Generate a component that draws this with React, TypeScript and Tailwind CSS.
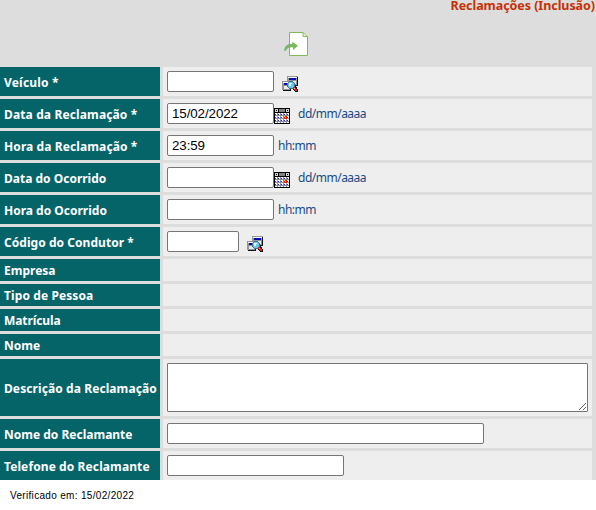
import type { ReactNode } from "react";

function LookupIcon({ className = "" }: { className?: string }) {
  return (
    <svg className={`shrink-0 ${className}`} width="16" height="16" viewBox="0 0 16 16" shapeRendering="crispEdges">
      <path fill="#111" d="M6 1h10v9H6zM1 6h8v9H1z" />
      <path fill="#949494" d="M5 0h11v1h-1v8H5zM0 5h8v9H0z" />
      <path fill="#e8e8e8" d="M7 5h7v3H7zM2 10h5v3H2z" />
      <path fill="#fff" d="M6 1h9v1H6zM1 6h6v1H1z" />
      <path fill="#0808b8" d="M7 2h7v2H7zM2 7h4v2H2z" />
      <path fill="#3f6d94" d="M7 5h4v1h1v1h1v4h-1v1h-1v1H7v-1H6v-1H5V7h1V6h1z" />
      <path fill="#67c8ee" d="M7 6h4v1h1v4h-1v1H7v-1H6V7h1z" />
      <path fill="#d9faff" d="M7 7h3v1H9v2H7z" />
      <path fill="#111" d="M13 10h1v1h1v2h1v3h-3v-1h-1v-1h-1v-2h1z" />
      <path fill="#e52010" d="M11 11h2v1h1v1h1v2h-2v-1h-1v-1h-1z" />
      <path fill="#ffb050" d="M12 12h1v1h-1z" />
    </svg>
  );
}

const calendarRows = [5, 8, 11, 14];
const calendarCols = [1, 4, 7, 10, 13];

function CalendarIcon() {
  return (
    <svg className="mt-[5px] shrink-0" width="16" height="16" viewBox="0 0 16 16" shapeRendering="crispEdges">
      <path fill="#000" d="M0 0h16v16H0z" />
      <path fill="#d4d4d4" d="M1 1h3v3H1zM12 1h3v3h-3z" />
      <path fill="#808080" d="M5 1h6v3H5z" />
      <path fill="#000" d="M2 2h1v1H2zM13 2h1v1h-1z" />
      <path fill="#8d8d9c" d="M1 5h14v10H1z" />
      {calendarRows.map((y) =>
        calendarCols.map((x) => (
          <g key={`${x}-${y}`}>
            <path fill="#fff" d={`M${x} ${y}h2v${y === 14 ? 1 : 2}h-2z`} />
            {y !== 14 && <path fill="#2828cc" d={`M${x} ${y + 1}h1v1h-1z`} />}
          </g>
        )),
      )}
      <path fill="#e81818" d="M10 8h3v3h-3z" />
      <path fill="#ffe020" d="M10 8h1v1h-1zM11 9h1v1h-1z" />
    </svg>
  );
}

function ExportIcon() {
  return (
    <svg width="26" height="26" viewBox="0 0 26 26" fill="none">
      <path d="M5.500 1.500h13.500l4.500 4v19h-18z" fill="#fff" stroke="#82b95a" />
      <path d="M19 1.500v4h4.500" fill="#e1efd7" stroke="#82b95a" />
      <path d="M.3 20c0-4.500 2.700-7 8-7v-2.200l5.700 3.900-5 4.300v-2.700c-4-.3-6 1-7.500 3.700z" fill="#7cba58" />
      <path d="M.8 19c.4-3.500 2.700-5.300 5.500-5.700" stroke="#6cb598" />
    </svg>
  );
}

function Field({ className, value = "" }: { className: string; value?: string }) {
  return (
    <input
      type="text"
      defaultValue={value}
      className={`h-[21px] shrink-0 rounded-[2px] border border-[#767676] bg-white px-1 py-0 font-['Liberation_Sans',Arial,sans-serif] text-[13.333px] leading-[15px] tracking-[-0.08px] text-black outline-none ${className}`}
    />
  );
}

function Hint({ children, className = "" }: { children: ReactNode; className?: string }) {
  return (
    <span className={`mt-[2px] whitespace-nowrap font-['Noto_Sans',sans-serif] text-[12px] leading-[17px] tracking-[-0.5px] text-[#174c82] ${className}`}>
      {children}
    </span>
  );
}

function Row({ label, spacing = "tracking-normal", height = "h-[29px] pt-0", labelPad = "pt-[2px]", children }: { label: string; spacing?: string; height?: string; labelPad?: string; children?: ReactNode }) {
  return (
    <div className={`grid grid-cols-[160px_429px] gap-[3px] ${height}`}>
      <div className={`flex items-center whitespace-nowrap bg-[#056468] pl-1 text-white ${labelPad}`}>
        <span className={`font-['Noto_Sans',sans-serif] text-[12px] font-bold leading-4 ${spacing}`}>{label}</span>
      </div>
      <div className="flex items-start bg-[#eee] pl-1 pt-1">{children}</div>
    </div>
  );
}

export default function App() {
  return (
    <main className="h-[510px] w-[596px] overflow-hidden bg-white">
      <form className="h-[480px] bg-[#ddd]">
        <h1 className="flex h-[31px] justify-end whitespace-nowrap pr-px font-['Noto_Sans',sans-serif] text-[12.5px] font-bold leading-[11px] tracking-[-0.05px] text-[#c53005]">
          Reclamações (Inclusão)
        </h1>
        <div className="flex h-9 justify-center pr-0.5">
          <ExportIcon />
        </div>
        <div className="flex flex-col gap-[3px]">
          <Row label="Veículo *" spacing="tracking-[0.2px]">
            <Field className="w-[107px]" />
            <LookupIcon className="ml-2 mt-[5px]" />
          </Row>
          <Row label="Data da Reclamação *" spacing="tracking-[0.13px]">
            <Field className="w-[107px]" value="15/02/2022" />
            <CalendarIcon />
            <Hint className="ml-2">dd/mm/aaaa</Hint>
          </Row>
          <Row label="Hora da Reclamação *" spacing="tracking-[0.1px]">
            <Field className="w-[107px]" value="23:59" />
            <Hint className="ml-1">hh:mm</Hint>
          </Row>
          <Row label="Data do Ocorrido">
            <Field className="w-[107px]" />
            <CalendarIcon />
            <Hint className="ml-2">dd/mm/aaaa</Hint>
          </Row>
          <Row label="Hora do Ocorrido">
            <Field className="w-[107px]" />
            <Hint className="ml-1">hh:mm</Hint>
          </Row>
          <Row label="Código do Condutor *" spacing="tracking-[0.05px]">
            <Field className="w-[72px]" />
            <LookupIcon className="ml-2 mt-[5px]" />
          </Row>
          <Row label="Empresa" height="h-[22px]" labelPad="pt-px" />
          <Row label="Tipo de Pessoa" spacing="tracking-[0.1px]" height="h-[22px]" labelPad="pt-px" />
          <Row label="Matrícula" spacing="tracking-[-0.1px]" height="h-[22px]" labelPad="pt-px" />
          <Row label="Nome" height="h-[22px]" labelPad="pt-px" />
          <Row label="Descrição da Reclamação" spacing="tracking-[0.09px]" height="h-[57px]">
            <textarea className="h-[49px] w-[421px] resize rounded-[1px] border border-[#767676] bg-white p-0.5 outline-none" />
          </Row>
          <Row label="Nome do Reclamante">
            <Field className="w-[317px]" />
          </Row>
          <Row label="Telefone do Reclamante" spacing="tracking-[0.1px]">
            <Field className="w-[177px]" />
          </Row>
        </div>
      </form>
      <footer className="pl-[10px] pt-[9px] font-['Liberation_Sans',Arial,sans-serif] text-[10px] leading-[14px] tracking-[0.32px] text-black">
        Verificado em: 15/02/2022
      </footer>
    </main>
  );
}
